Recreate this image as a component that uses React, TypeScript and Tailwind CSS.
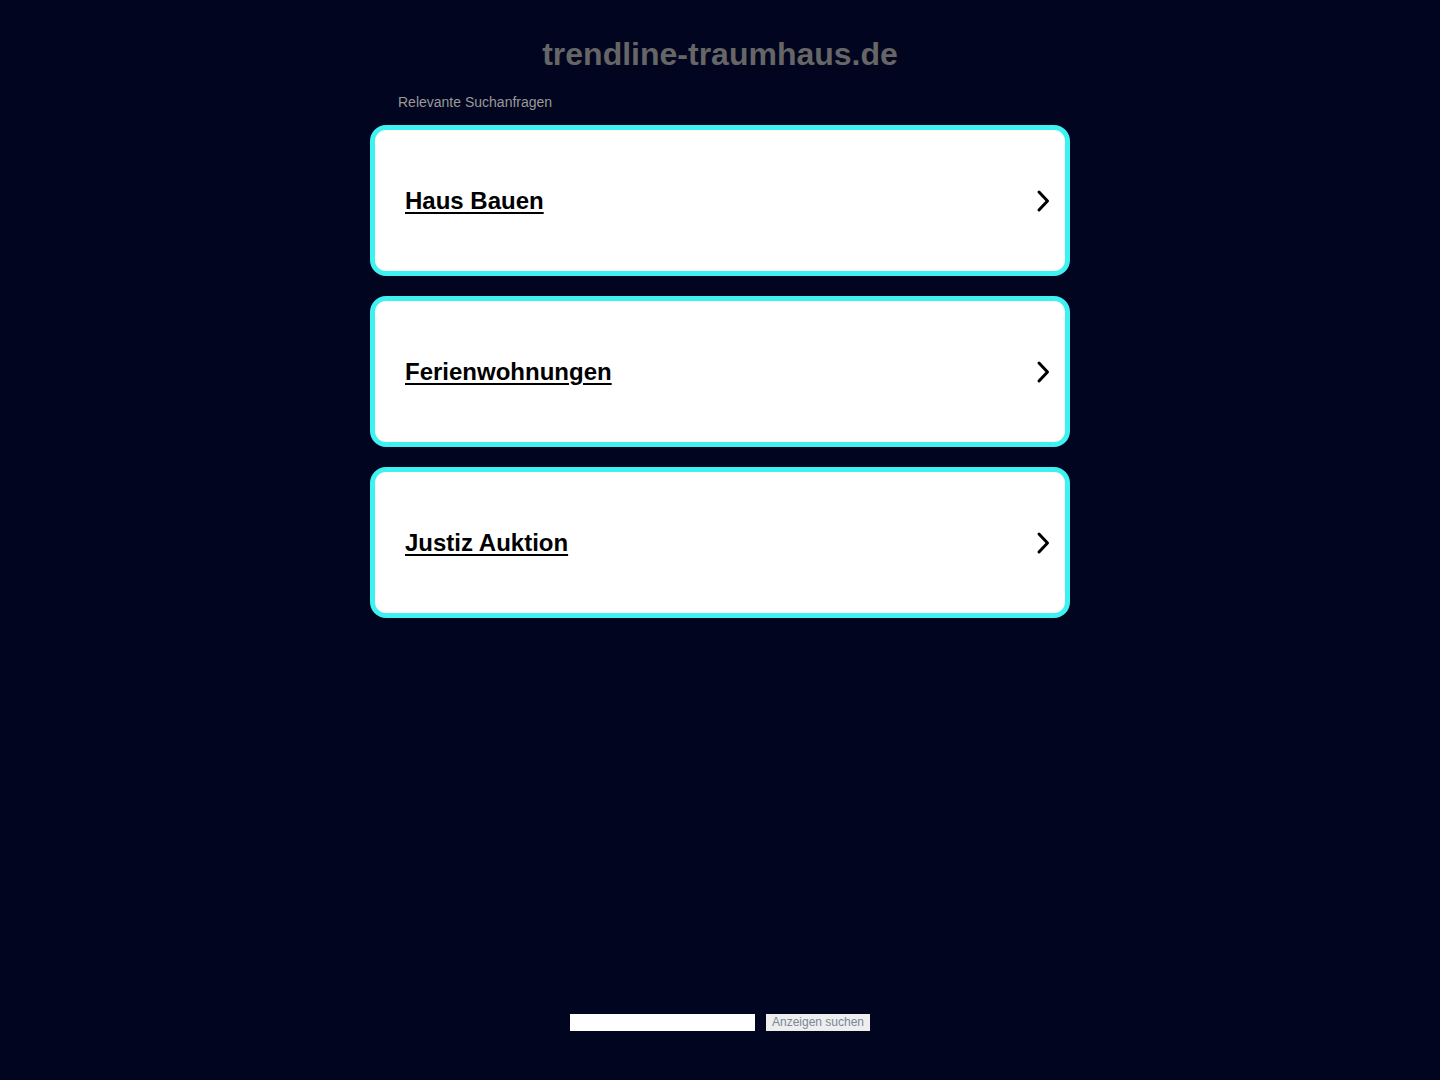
import React from "react";

const items = ["Haus Bauen", "Ferienwohnungen", "Justiz Auktion"];

function Chevron() {
  return (
    <svg width="16" height="24" viewBox="0 0 16 24" fill="none">
      <path d="M4 3 L12.5 12 L4 21" stroke="#000" strokeWidth="3" strokeLinecap="round" strokeLinejoin="round" />
    </svg>
  );
}

export default function App() {
  return (
    <div className="min-h-[1080px] bg-[#010520] flex flex-col items-center" style={{ fontFamily: '"Liberation Sans", Arial, sans-serif' }}>
      <h1 className="mt-[34px] text-[32px] leading-[40px] font-bold text-[#666666]">trendline-traumhaus.de</h1>
      <div className="w-[700px] flex flex-col">
        <div className="mt-[20px] pl-[28px] text-[14px] leading-[16px] text-[#999999]">Relevante Suchanfragen</div>
        <div className="mt-[15px] flex flex-col gap-[20px]">
          {items.map((t) => (
            <a key={t} href="#" className="h-[151px] border-[5px] border-[#3ff2f2] rounded-[16px] bg-white flex items-center justify-between pl-[30px] pr-[14px]">
              <span className="text-[24px] font-bold text-black underline underline-offset-[3px] decoration-2">{t}</span>
              <Chevron />
            </a>
          ))}
        </div>
      </div>
      <div className="mt-auto mb-[49px] flex items-center gap-[11px]">
        <input className="w-[185px] h-[17px] bg-white border-0 outline-none" />
        <button className="h-[17px] px-[6px] bg-[#eeeeee] text-[12px] leading-[17px] text-[#778899]">Anzeigen suchen</button>
      </div>
    </div>
  );
}
